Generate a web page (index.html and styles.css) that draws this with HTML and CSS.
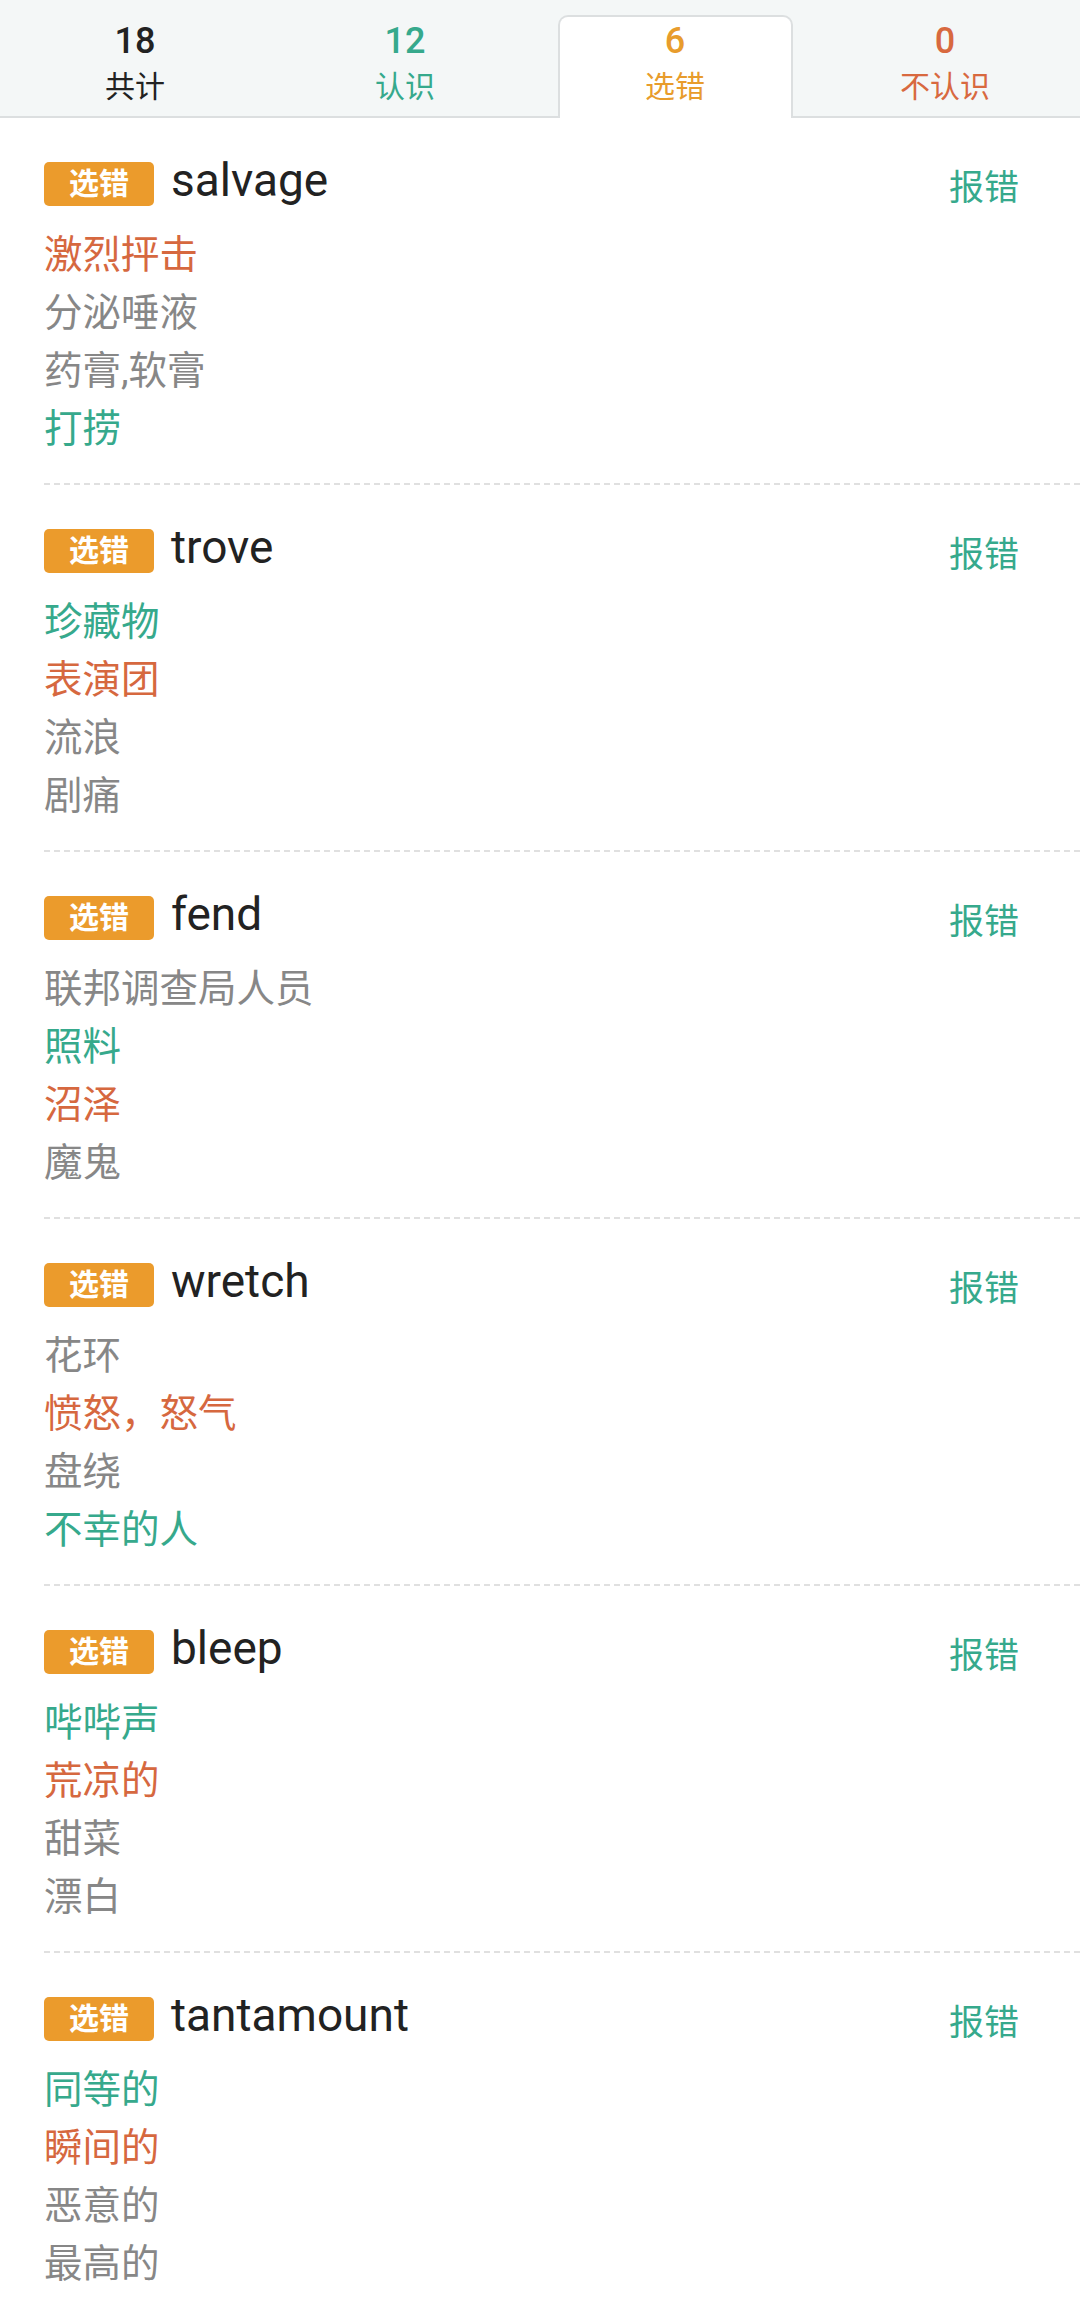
FILE: index.html
```html
<!DOCTYPE html>
<html lang="zh-CN">
<head>
<meta charset="utf-8">
<link rel="stylesheet" href="styles.css">
</head>
<body>
<div class="tabs">
  <div class="tab"><div class="num c-total">18</div><div class="lbl c-total">共计</div></div>
  <div class="tab"><div class="num c-know">12</div><div class="lbl c-know">认识</div></div>
  <div class="tab active"><div class="num c-wrong">6</div><div class="lbl c-wrong">选错</div></div>
  <div class="tab"><div class="num c-unk">0</div><div class="lbl c-unk">不认识</div></div>
</div>
<div class="list">
  <div class="card">
    <div class="head"><span class="badge">选错</span><span class="word">salvage</span><span class="report">报错</span></div>
    <div class="m red">激烈抨击</div><div class="m gray">分泌唾液</div><div class="m gray">药膏,软膏</div><div class="m green">打捞</div>
  </div>
  <div class="card">
    <div class="head"><span class="badge">选错</span><span class="word">trove</span><span class="report">报错</span></div>
    <div class="m green">珍藏物</div><div class="m red">表演团</div><div class="m gray">流浪</div><div class="m gray">剧痛</div>
  </div>
  <div class="card">
    <div class="head"><span class="badge">选错</span><span class="word">fend</span><span class="report">报错</span></div>
    <div class="m gray">联邦调查局人员</div><div class="m green">照料</div><div class="m red">沼泽</div><div class="m gray">魔鬼</div>
  </div>
  <div class="card">
    <div class="head"><span class="badge">选错</span><span class="word">wretch</span><span class="report">报错</span></div>
    <div class="m gray">花环</div><div class="m red">愤怒，怒气</div><div class="m gray">盘绕</div><div class="m green">不幸的人</div>
  </div>
  <div class="card">
    <div class="head"><span class="badge">选错</span><span class="word">bleep</span><span class="report">报错</span></div>
    <div class="m green">哔哔声</div><div class="m red">荒凉的</div><div class="m gray">甜菜</div><div class="m gray">漂白</div>
  </div>
  <div class="card">
    <div class="head"><span class="badge">选错</span><span class="word">tantamount</span><span class="report">报错</span></div>
    <div class="m green">同等的</div><div class="m red">瞬间的</div><div class="m gray">恶意的</div><div class="m gray">最高的</div>
  </div>
</div>
</body>
</html>
```
FILE: styles.css
```css
html, body {
  margin: 0;
  padding: 0;
  background: #ffffff;
}
body {
  width: 1080px;
  height: 2317px;
  overflow: hidden;
  font-family: Roboto, "Noto Sans CJK SC", sans-serif;
}
.tabs {
  display: grid;
  grid-template-columns: repeat(4, 1fr);
  height: 118px;
  background: #f4f7f7;
  border-bottom: 2px solid #dcdfe0;
  box-sizing: border-box;
  align-items: stretch;
}
.tab {
  display: flex;
  flex-direction: column;
  align-items: center;
  padding-top: 20px;
  box-sizing: border-box;
}
.tab.active {
  justify-self: center;
  width: 235px;
  margin-top: 15px;
  margin-bottom: -2px;
  padding-top: 3px;
  background: #ffffff;
  border: 2px solid #dcdfe0;
  border-bottom: none;
  border-radius: 10px 10px 0 0;
}
.num {
  font-size: 36px;
  font-weight: 500;
  line-height: 42px;
}
.lbl {
  font-size: 30px;
  line-height: 40px;
  margin-top: 5px;
}
.c-total { color: #222222; }
.c-know { color: #36a98c; }
.c-wrong { color: #e89c2c; }
.c-unk { color: #d8693f; }

.list {
  padding-left: 44px;
}
.card {
  padding: 44px 0 25px 0;
  border-bottom: 2px dashed #e0e0e0;
}
.head {
  display: flex;
  align-items: center;
  height: 44px;
  margin-bottom: 20px;
}
.badge {
  width: 110px;
  height: 44px;
  border-radius: 5px;
  background: #eb9b2c;
  color: #ffffff;
  font-size: 30px;
  font-weight: 700;
  line-height: 44px;
  text-align: center;
}
.word {
  margin-left: 17px;
  font-size: 46px;
  color: #222222;
  line-height: 44px;
  margin-top: -8px;
}
.report {
  margin-left: auto;
  margin-right: 61px;
  font-size: 35px;
  color: #36a98c;
  margin-top: 0;
}
.m {
  font-size: 38.5px;
  line-height: 58px;
}
.red { color: #d6683f; }
.gray { color: #878787; }
.green { color: #36a98c; }
```
